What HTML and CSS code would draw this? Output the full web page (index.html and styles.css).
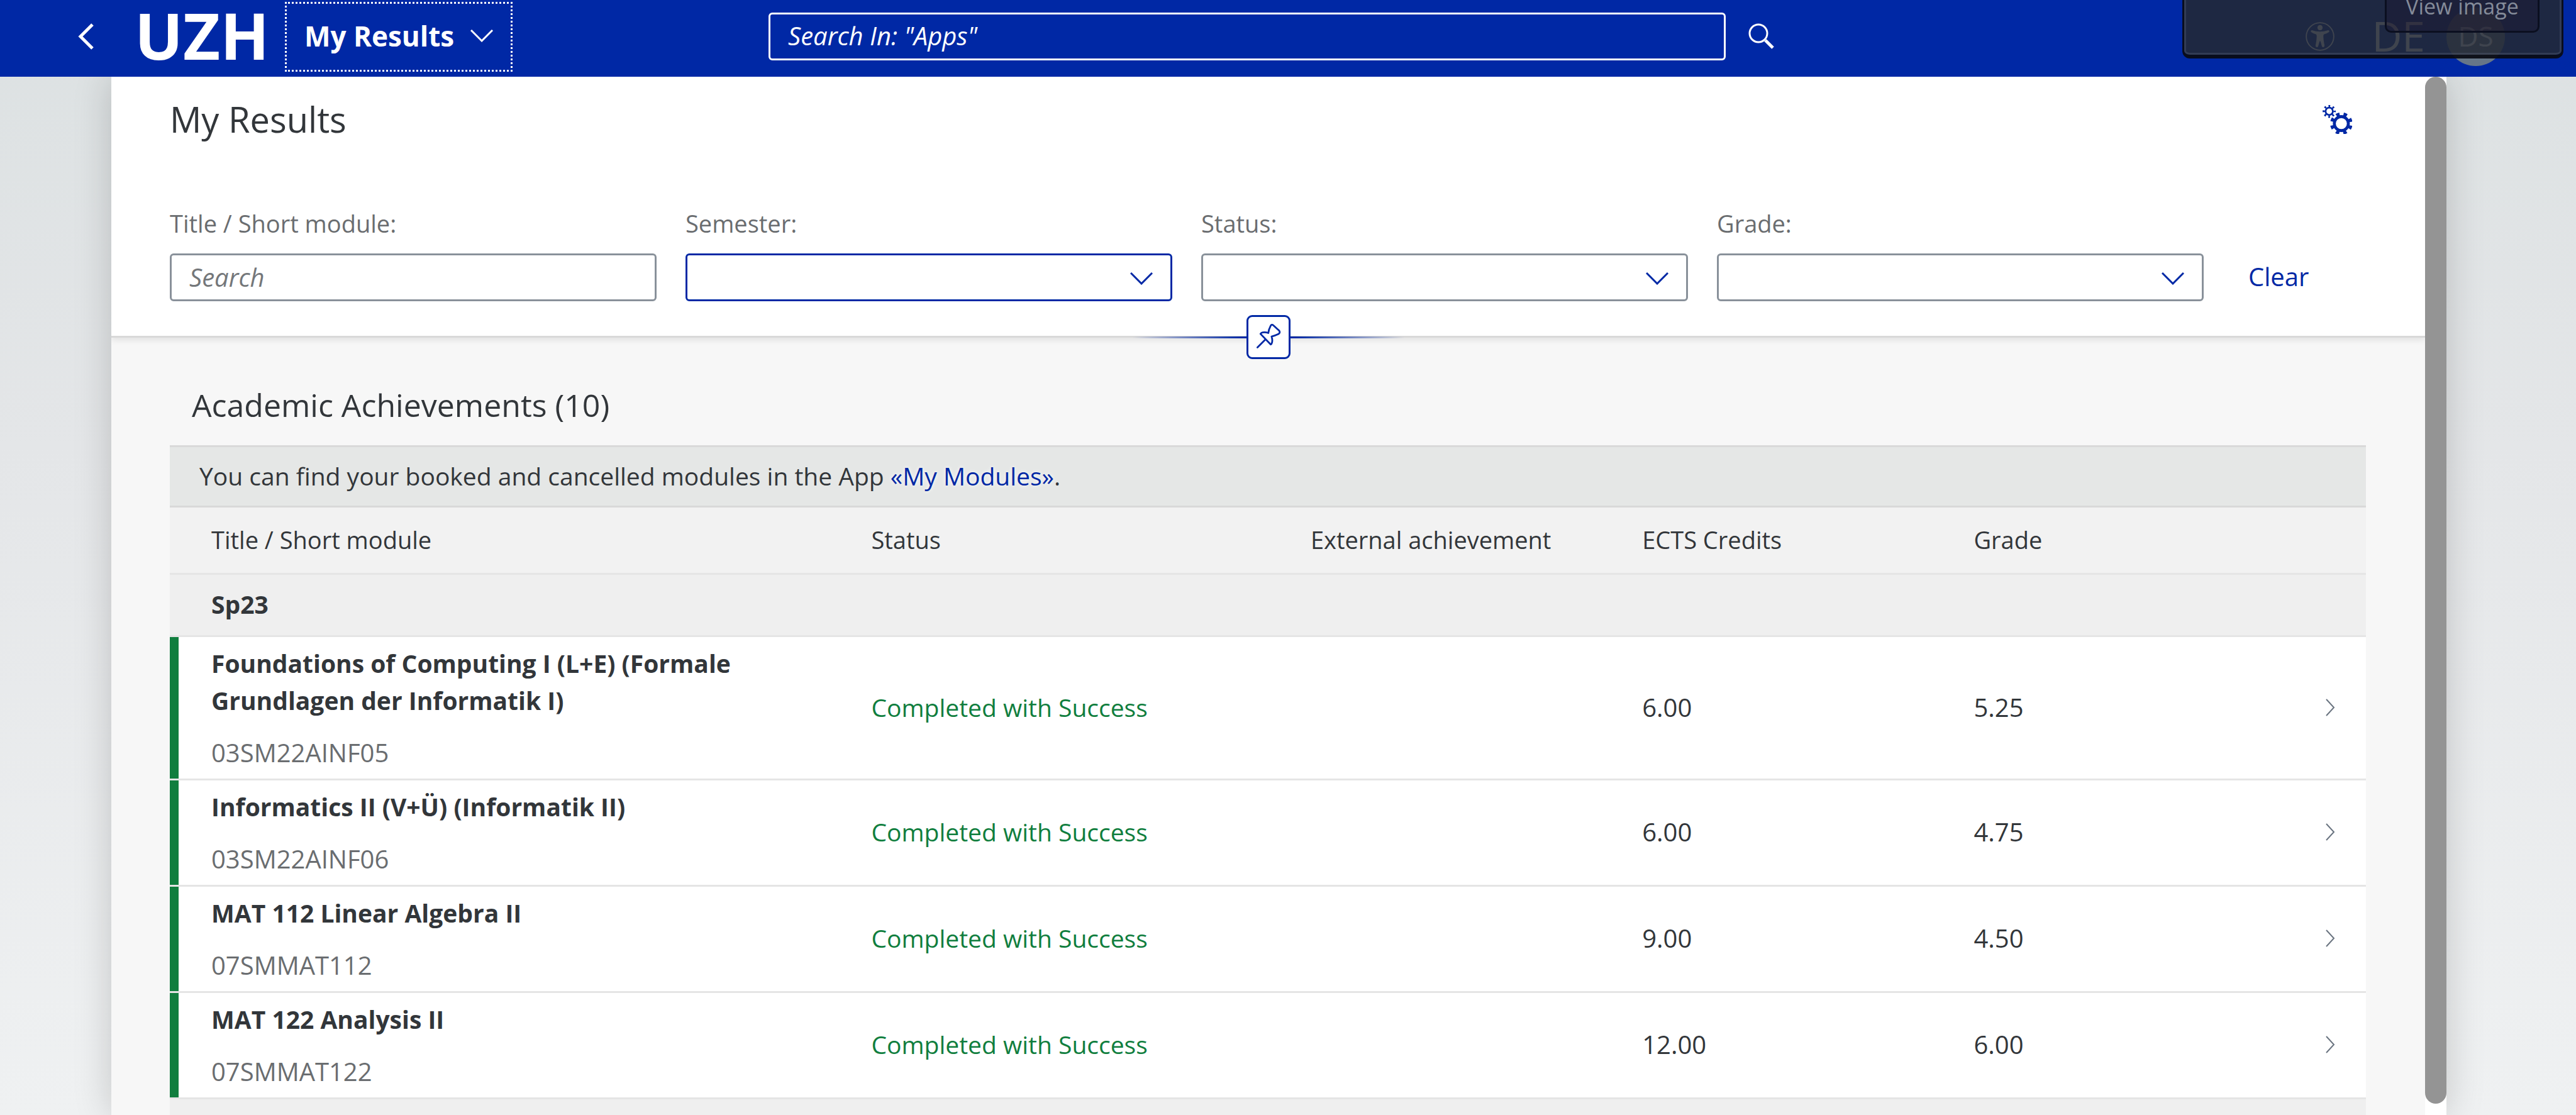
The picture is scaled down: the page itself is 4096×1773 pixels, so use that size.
FILE: index.html
```html
<!DOCTYPE html>
<html lang="en">
<head>
<meta charset="utf-8">
<meta name="viewport" content="width=device-width, initial-scale=1">
<title>My Results</title>
<link rel="stylesheet" href="styles.css">
</head>
<body>
<header class="shell">
  <div class="shell-start">
    <button class="shell-back" type="button" aria-label="Back">
      <svg class="icon-back" viewBox="0 0 26 44" aria-hidden="true"><path d="M23 3 4 22l19 19"/></svg>
    </button>
    <a class="logo" href="#">UZH</a>
    <button class="shell-menu" type="button">My Results
      <svg class="icon-chevron" viewBox="0 0 36 20" aria-hidden="true"><path d="m1 1 17 17L35 1"/></svg>
    </button>
  </div>
  <form class="shell-search" role="search">
    <input class="shell-input" type="search" aria-label="Search" placeholder='Search In: "Apps"'>
    <button class="search-button" type="button" aria-label="Search">
      <svg class="icon-search" viewBox="0 0 42 42" aria-hidden="true"><circle cx="16" cy="16" r="14"/><path class="handle" d="m27 27 12 12"/></svg>
    </button>
  </form>
  <div class="shell-end">
    <button class="shell-action" type="button" aria-label="Accessibility">
      <svg class="icon-access" viewBox="0 0 198 200" aria-hidden="true"><circle class="ring" cx="99" cy="100" r="95"/><circle cx="99" cy="39" r="18"/><path d="M42 56q-8 2-7 10 2 7 34 18 7 3 7 12 0 26-8 66-1 11 8 12 7 1 10-6l10-34q3-6 6 0l10 34q3 7 10 6 9-1 8-12-8-40-8-66 0-9 7-12 32-11 34-18 1-8-7-10-57 20-114 0Z"/></svg>
    </button>
    <button class="shell-language" type="button">DE</button>
    <button class="avatar" type="button">DS</button>
  </div>
  <div class="overlay"><button class="overlay-button" type="button">View image</button></div>
</header>

<main class="page">
  <div class="sheet">
    <div class="sheet-body">
      <section class="filters">
        <div class="title-row">
          <h1 class="page-title">My Results</h1>
          <button class="settings" type="button" aria-label="Settings">
            <svg class="icon-gears" viewBox="42 36 201 198" aria-hidden="true">
              <circle cx="87" cy="79" r="25" stroke-width="12"/>
              <circle cx="87" cy="79" r="37" stroke-width="16" pathLength="8" stroke-dasharray=".4 .6" stroke-dashoffset=".2"/>
              <circle cx="170" cy="163" r="48" stroke-width="20"/>
              <circle cx="170" cy="163" r="66" stroke-width="22" pathLength="8" stroke-dasharray=".46 .54" stroke-dashoffset="-.27"/>
            </svg>
          </button>
        </div>
        <form class="filter-bar">
          <div class="field">
            <label class="label" for="module">Title / Short module:</label>
            <input class="control" id="module" type="text" placeholder="Search">
          </div>
          <div class="field">
            <label class="label" for="semester">Semester:</label>
            <div class="select-box">
              <select class="control control-active" id="semester"><option></option></select>
              <svg class="icon-chevron select-arrow" viewBox="0 0 36 20" aria-hidden="true"><path d="m1 1 17 17L35 1"/></svg>
            </div>
          </div>
          <div class="field">
            <label class="label" for="status">Status:</label>
            <div class="select-box">
              <select class="control" id="status"><option></option></select>
              <svg class="icon-chevron select-arrow" viewBox="0 0 36 20" aria-hidden="true"><path d="m1 1 17 17L35 1"/></svg>
            </div>
          </div>
          <div class="field">
            <label class="label" for="grade">Grade:</label>
            <div class="select-box">
              <select class="control" id="grade"><option></option></select>
              <svg class="icon-chevron select-arrow" viewBox="0 0 36 20" aria-hidden="true"><path d="m1 1 17 17L35 1"/></svg>
            </div>
          </div>
          <button class="clear" type="reset">Clear</button>
        </form>
        <div class="pin-line">
          <button class="pin" type="button" aria-label="Pin header">
            <svg class="icon-pin" viewBox="60 54 276 276" aria-hidden="true"><path d="M212 116q7-15 20-4l39 36q10 14-6 24-20 10-46 16 8 22 3 42-2 10-9 13L143 170q5-9 14-10 20-4 40 4 2-24 15-48ZM178 207l-56 56"/></svg>
          </button>
        </div>
      </section>

      <section class="results">
        <h2 class="results-title">Academic Achievements (10)</h2>
        <p class="info">You can find your booked and cancelled modules in the App <a class="info-link" href="#">«My Modules»</a>.</p>
        <table class="table">
          <colgroup>
            <col class="col-title"><col class="col-status"><col class="col-value"><col class="col-value"><col class="col-value"><col class="col-nav">
          </colgroup>
          <thead>
            <tr class="head">
              <th scope="col">Title / Short module</th><th scope="col">Status</th><th scope="col">External achievement</th><th scope="col">ECTS Credits</th><th scope="col">Grade</th><td></td>
            </tr>
          </thead>
          <tbody>
            <tr class="group"><th colspan="6" scope="rowgroup">Sp23</th></tr>
            <tr class="item">
              <td><div class="module">Foundations of Computing I (L+E) (Formale Grundlagen der Informatik I)</div><div class="code">03SM22AINF05</div></td>
              <td class="success">Completed with Success</td><td></td><td>6.00</td><td>5.25</td>
              <td class="nav"><svg class="icon-next" viewBox="0 0 16 28" aria-hidden="true"><path d="m2 1 12 13L2 27"/></svg></td>
            </tr>
            <tr class="item">
              <td><div class="module">Informatics II (V+Ü) (Informatik II)</div><div class="code">03SM22AINF06</div></td>
              <td class="success">Completed with Success</td><td></td><td>6.00</td><td>4.75</td>
              <td class="nav"><svg class="icon-next" viewBox="0 0 16 28" aria-hidden="true"><path d="m2 1 12 13L2 27"/></svg></td>
            </tr>
            <tr class="item">
              <td><div class="module">MAT 112 Linear Algebra II</div><div class="code">07SMMAT112</div></td>
              <td class="success">Completed with Success</td><td></td><td>9.00</td><td>4.50</td>
              <td class="nav"><svg class="icon-next" viewBox="0 0 16 28" aria-hidden="true"><path d="m2 1 12 13L2 27"/></svg></td>
            </tr>
            <tr class="item">
              <td><div class="module">MAT 122 Analysis II</div><div class="code">07SMMAT122</div></td>
              <td class="success">Completed with Success</td><td></td><td>12.00</td><td>6.00</td>
              <td class="nav"><svg class="icon-next" viewBox="0 0 16 28" aria-hidden="true"><path d="m2 1 12 13L2 27"/></svg></td>
            </tr>
            <tr class="group"><th colspan="6"></th></tr>
          </tbody>
        </table>
      </section>
    </div>
    <div class="scroll-track"><div class="scroll-thumb"></div></div>
  </div>
</main>
</body>
</html>
```
FILE: styles.css
```css
:root {
  --brand: #0028a5;
  --text: #32363a;
  --muted: #6a6d70;
  --success: #107e3e;
  --line: #e5e5e5;
  --line-strong: #d9d9d9;
}

*, *::before, *::after { box-sizing: border-box; }

body {
  margin: 0;
  height: 100vh;
  overflow: hidden;
  display: flex;
  flex-direction: column;
  background: linear-gradient(#dce1e2, #e4e6e8 40%, #eff1f2);
  color: var(--text);
  font: 38px/52px "Open Sans", "Noto Sans", sans-serif;
}

button, input, select { font: inherit; color: inherit; }

button {
  padding: 0;
  border: 0;
  background: none;
  cursor: pointer;
}

h1, h2, p { margin: 0; font-weight: 400; }

svg { display: block; fill: none; stroke: currentColor; }

/* Shell header */
.shell {
  position: relative;
  z-index: 1;
  flex: none;
  display: grid;
  grid-template-columns: minmax(0, 1fr) 1600px minmax(0, 1fr);
  align-items: center;
  height: 122px;
  padding: 0 52px 6px 0;
  background: var(--brand);
  color: #fff;
}

.shell-start { display: flex; align-items: center; }

.shell-back { padding: 16px 64px 16px 124px; }

.icon-back { width: 26px; height: 44px; stroke-width: 5; }

.logo {
  width: 239px;
  color: #fff;
  font-size: 102px;
  font-weight: 700;
  line-height: 106px;
  padding-bottom: 4px;
  text-decoration: none;
}

.shell-menu {
  display: flex;
  align-items: center;
  justify-content: space-between;
  width: 362px;
  height: 111px;
  padding: 0 28px 2px;
  border: 3px dotted #fff;
  font-size: 44px;
  font-weight: 700;
}

.icon-chevron { width: 36px; height: 20px; stroke-width: 3; }

.shell-search { display: flex; align-items: center; gap: 36px; }

.shell-input {
  flex: 1;
  min-width: 0;
  height: 76px;
  padding: 0 28px 4px;
  border: 3px solid #fff;
  border-radius: 6px;
  background: transparent;
  font-size: 40px;
  appearance: none;
  outline: 0;
}

.shell-input::placeholder { color: #fff; opacity: 1; font-style: italic; }

.icon-search { width: 42px; height: 42px; stroke-width: 3; }

.icon-search .handle { stroke-width: 5; }

.shell-end {
  display: flex;
  align-items: center;
  justify-content: flex-end;
  padding-right: 61px;
}

.shell-action { margin-right: 59px; }

.icon-access { width: 46px; height: 46px; fill: currentColor; stroke: none; }

.icon-access .ring { fill: none; stroke: currentColor; stroke-width: 8; }

.shell-language { padding-bottom: 4px; margin-right: 34px; font-size: 66px; line-height: 80px; }

.avatar {
  width: 93px;
  height: 93px;
  padding-bottom: 3px;
  border-radius: 50%;
  background: #667688;
  font-size: 44px;
}

.overlay {
  position: absolute;
  top: -12px;
  right: 20px;
  display: flex;
  align-items: flex-start;
  justify-content: flex-end;
  width: 606px;
  height: 105px;
  padding-right: 35px;
  border: solid rgba(10, 12, 20, .94);
  border-width: 3px 3px 6px;
  border-radius: 12px;
  background: rgba(34, 40, 52, .87);
  background-clip: padding-box;
  box-shadow: inset 0 0 0 3px rgba(90, 100, 120, .35);
}

.overlay-button {
  width: 246px;
  height: 61px;
  padding-bottom: 24px;
  border: 3px solid #0b0f20;
  border-radius: 10px;
  background: rgba(26, 16, 44, .35);
  color: #848b99;
  font-size: 34px;
  line-height: 30px;
}

/* Page sheet */
.page {
  flex: 1;
  min-height: 0;
  display: flex;
  padding: 0 206px 0 177px;
}

.sheet {
  flex: 1;
  min-width: 0;
  display: flex;
  background: #fff;
  box-shadow: 0 0 56px rgba(0, 0, 0, .18);
}

.sheet-body {
  flex: 1;
  min-width: 0;
  overflow: hidden;
  background: #f7f7f7;
}

.scroll-track { display: flex; width: 34px; padding-bottom: 18px; }

.scroll-thumb { flex: 1; border-radius: 17px; background: #949494; }

/* Filters */
.filters {
  position: relative;
  padding: 32px 94px 55px 93px;
  border-bottom: 3px solid var(--line-strong);
  background: #fff;
  box-shadow: 0 3px 10px rgba(0, 0, 0, .1);
}

.title-row {
  display: flex;
  align-items: center;
  justify-content: space-between;
  padding-right: 22px;
  margin-bottom: 103px;
}

.page-title { font-size: 56px; line-height: 70px; padding-bottom: 2px; }

.settings { color: var(--brand); }

.icon-gears { width: 47px; height: 46px; }

.filter-bar {
  display: grid;
  grid-template-columns: repeat(4, minmax(0, 1fr)) 212px;
  gap: 46px;
  align-items: end;
}

.field { display: grid; gap: 22px; }

.label { color: var(--muted); }

.control {
  display: block;
  width: 100%;
  height: 76px;
  padding: 0 28px 2px;
  border: 3px solid #89919a;
  border-radius: 6px;
  background: #fff;
  font-size: 40px;
  appearance: none;
  outline: 0;
}

.control::placeholder { color: #74777a; opacity: 1; font-style: italic; }

.control-active { border-color: var(--brand); }

.select-box { position: relative; }

.select-arrow {
  position: absolute;
  top: 30px;
  right: 31px;
  color: var(--brand);
  pointer-events: none;
}

.clear {
  height: 76px;
  padding: 0 0 2px 25px;
  color: var(--brand);
  font-size: 40px;
  text-align: left;
}

.pin-line {
  position: absolute;
  bottom: -37px;
  left: 50%;
  display: flex;
  justify-content: center;
  width: 432px;
  margin-left: -216px;
  background: linear-gradient(90deg, transparent, var(--brand) 40%, var(--brand) 60%, transparent) center / 100% 3px no-repeat;
}

.pin {
  width: 70px;
  height: 70px;
  border: 3px solid var(--brand);
  border-radius: 9px;
  background: #fff;
  color: var(--brand);
}

.icon-pin { width: 64px; height: 64px; stroke-width: 12; stroke-linecap: round; stroke-linejoin: round; }

/* Results */
.results { padding: 74px 94px 0 93px; }

.results-title { padding-left: 35px; margin-bottom: 31px; font-size: 50px; line-height: 66px; }

.info {
  padding: 19px 47px 21px;
  border: solid var(--line-strong);
  border-width: 3px 0;
  background: #e5e7e6;
  font-size: 39px;
  line-height: 53px;
}

.info-link { color: var(--brand); text-decoration: none; text-shadow: 0 0 6px #fff; }

.table {
  width: 100%;
  table-layout: fixed;
  border-collapse: separate;
  border-spacing: 0;
}

.col-title { width: 31.4%; }
.col-status { width: 20%; }
.col-value { width: 15.1%; }

.table th, .table td {
  padding: 0 19px 2px;
  border-bottom: 3px solid var(--line);
  font-weight: 400;
  text-align: left;
  vertical-align: middle;
}

.table th:first-child, .table td:first-child { padding-left: 66px; }

.head { height: 107px; background: #f2f2f2; }

.group { height: 99px; background: #efefef; }

.table .group th { font-size: 39px; font-weight: 700; }

.item { background: #fff; font-size: 40px; }

.table .item td:first-child {
  padding: 12px 19px 12px 66px;
  background: linear-gradient(90deg, var(--success) 14px, transparent 14px) padding-box;
  line-height: 59px;
}

.module { margin-bottom: 24px; font-size: 39px; font-weight: 700; }

.code { color: var(--muted); }

.table .success { color: var(--success); font-size: 39px; }

.table .item .nav { padding: 0 0 2px 2px; }

.icon-next { width: 16px; height: 28px; margin: 0 auto; color: #6a7480; stroke-width: 2; }
```
